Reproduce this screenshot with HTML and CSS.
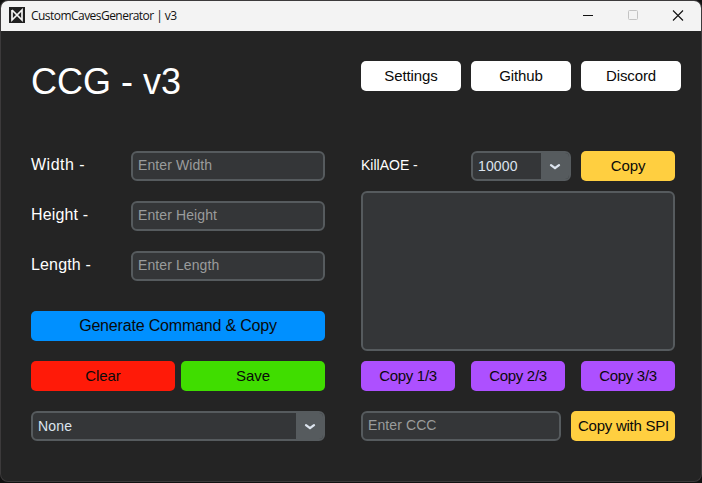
FILE: index.html
```html
<!DOCTYPE html>
<html lang="en">
<head>
<meta charset="utf-8">
<title>CustomCavesGenerator | v3</title>
<link rel="stylesheet" href="styles.css">
</head>
<body>
<div class="window">
  <header class="titlebar">
    <svg class="app-icon" width="16" height="16" viewBox="0 0 16 16"><rect width="16" height="16" fill="#202020"/><path d="M3 3V13L13 3V13L3 3" fill="none" stroke="#f4f4f4" stroke-width="1.7"/></svg>
    <span class="app-name">CustomCavesGenerator | v3</span>
    <div class="controls">
      <svg width="10" height="10" viewBox="0 0 10 10"><path d="M0 4.5H10" stroke="#111"/></svg>
      <svg width="10" height="10" viewBox="0 0 10 10"><rect x=".5" y="-.5" width="9" height="9" rx="1" fill="none" stroke="#c3c3c3"/></svg>
      <svg width="10" height="10" viewBox="0 0 10 10"><path d="M0 -.5L10 9.5M10 -.5L0 9.5" stroke="#111" stroke-width="1.1"/></svg>
    </div>
  </header>
  <main class="content">
    <section class="left">
      <h1 class="heading">CCG - v3</h1>
      <div class="row field"><label class="label wide">Width -</label><input class="input" placeholder="Enter Width"></div>
      <div class="row field"><label class="label">Height -</label><input class="input" placeholder="Enter Height"></div>
      <div class="row field"><label class="label">Length -</label><input class="input" placeholder="Enter Length"></div>
      <button class="btn blue">Generate Command &amp; Copy</button>
      <div class="row pair"><button class="btn red">Clear</button><button class="btn green">Save</button></div>
      <div class="select"><span class="value">None</span><span class="arrow"><svg width="12" height="8" viewBox="0 0 12 8"><path d="M2 2.2L6 5.2L10 2.2" fill="none" stroke="#dce4ee" stroke-width="2.3" stroke-linecap="round" stroke-linejoin="round"/></svg></span></div>
    </section>
    <section class="right">
      <nav class="row links"><button class="btn white">Settings</button><button class="btn white">Github</button><button class="btn white">Discord</button></nav>
      <div class="row kill">
        <label class="label small">KillAOE -</label>
        <div class="select short"><span class="value">10000</span><span class="arrow"><svg width="12" height="8" viewBox="0 0 12 8"><path d="M2 2.2L6 5.2L10 2.2" fill="none" stroke="#dce4ee" stroke-width="2.3" stroke-linecap="round" stroke-linejoin="round"/></svg></span></div>
        <button class="btn yellow">Copy</button>
      </div>
      <div class="output"></div>
      <div class="row copies"><button class="btn purple">Copy 1/3</button><button class="btn purple">Copy 2/3</button><button class="btn purple">Copy 3/3</button></div>
      <div class="row spi"><input class="input" placeholder="Enter CCC"><button class="btn yellow">Copy with SPI</button></div>
    </section>
  </main>
</div>
</body>
</html>
```
FILE: styles.css
```css
* { box-sizing: border-box; }
body { margin: 0; height: 483px; padding: 1px 1px 2px; background: #111; overflow: hidden; font-family: "Liberation Sans", Arial, sans-serif; }
.window { height: 480px; background: #242424; border-radius: 7px; overflow: hidden; box-shadow: 0 0 0 1px #3c3a3b; }
.titlebar { height: 30px; background: #f3f3f3; display: flex; align-items: center; padding: 0 18px 0 8px; }
.app-icon { display: block; margin-top: -2px; }
.app-name { margin: -1px 0 0 6px; font: 12px "Open Sans", sans-serif; letter-spacing: -0.54px; color: #111; white-space: pre; }
.controls { margin-left: auto; display: flex; gap: 35px; }
.controls svg { display: block; overflow: visible; }
.content { display: flex; gap: 36px; padding: 30px 20px 0 30px; }
.left { width: 294px; display: flex; flex-direction: column; }
.right { width: 320px; display: flex; flex-direction: column; }
.row { display: flex; }
.heading { margin: 0 0 50px; height: 40px; line-height: 41px; font-size: 36px; font-weight: 400; color: #fff; white-space: pre; }
.field { margin-bottom: 20px; }
.label { width: 100px; height: 30px; line-height: 28px; font-size: 16px; letter-spacing: 0.15px; color: #fff; }
.wide { letter-spacing: 0.5px; }
.input { width: 194px; height: 30px; padding: 0 5px 2px; background: #343638; border: 2px solid #565b5e; border-radius: 6px; font: 14px "Liberation Sans", Arial, sans-serif; letter-spacing: 0.1px; color: #dce4ee; outline: none; }
.input::placeholder { color: #9a9c9c; }
.btn { height: 30px; padding: 0; border: 0; border-radius: 5px; font: 15px/30px "Liberation Sans", Arial, sans-serif; letter-spacing: -0.1px; color: #0a0a0a; white-space: nowrap; }
.white { width: 100px; background: #fff; }
.blue { background: #0090ff; font-size: 16px; letter-spacing: -0.18px; margin: 10px 0 20px; }
.pair { gap: 6px; margin-bottom: 20px; }
.pair .btn { flex: 1; }
.red { background: #ff1a08; }
.green { background: #40dd00; }
.yellow { background: #ffcf40; width: 94px; }
.purple { background: #ad50ff; width: 94px; letter-spacing: -0.3px; }
.select { display: flex; height: 30px; background: #343638; border: 2px solid #565b5e; border-radius: 6px; font-size: 14px; letter-spacing: 0.15px; color: #dce4ee; overflow: hidden; }
.value { flex: 1; padding-left: 5px; line-height: 26px; }
.arrow { width: 27px; background: #565b5e; display: flex; align-items: center; justify-content: center; padding-top: 2px; }
.links { gap: 10px; margin-bottom: 60px; }
.kill { margin-bottom: 10px; }
.small { width: 110px; font-size: 14px; letter-spacing: 0; }
.short { width: 100px; margin-right: 10px; }
.short .arrow { width: 28px; }
.output { width: 314px; height: 160px; background: #343638; border: 2px solid #565b5e; border-radius: 6px; margin-bottom: 10px; }
.copies { gap: 16px; margin-bottom: 20px; }
.spi { gap: 10px; }
.spi .input { width: 200px; }
.spi .btn { width: 104px; letter-spacing: -0.25px; padding-left: 1px; }
```
